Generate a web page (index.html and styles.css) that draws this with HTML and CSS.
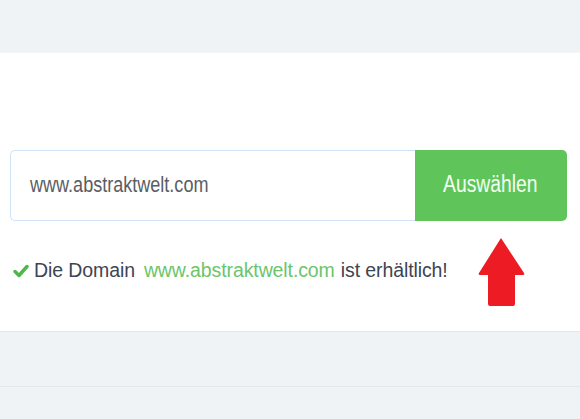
FILE: index.html
```html
<!DOCTYPE html>
<html lang="de">
<head>
<meta charset="utf-8">
<title>Domain</title>
<link rel="stylesheet" href="styles.css">
</head>
<body>
<div class="topbar"></div>
<section class="panel">
  <form class="search">
    <div class="field"><span class="narrow">www.abstraktwelt.com</span></div>
    <button type="button" class="btn"><span class="narrow">Auswählen</span></button>
  </form>
  <p class="status">
    <svg class="check" viewBox="0 0 16 14" width="16" height="14"><path d="M2 7.5 L6 11.5 L14 2.5" fill="none" stroke="#4cb848" stroke-width="3.4" stroke-linecap="round" stroke-linejoin="round"/></svg>
    <span class="txt">Die Domain</span>
    <span class="domain">www.abstraktwelt.com</span>
    <span class="txt">ist erhältlich!</span>
  </p>
  <svg class="arrow" viewBox="0 0 48 70" width="48" height="70"><path d="M23 1 L46 36 Q47 38 45 38 L37 38 L37 67 Q37 69 35 69 L12 69 Q10 69 10 67 L10 38 L2 38 Q0 38 1 36 Z" fill="#ed1c24"/></svg>
</section>
<div class="row"></div>
<div class="row last"></div>
</body>
</html>
```
FILE: styles.css
```css
* { box-sizing: border-box; }
html, body { margin: 0; padding: 0; }
body {
  background: #eff3f6;
  font-family: "Liberation Sans", Arial, sans-serif;
  width: 580px;
  height: 419px;
  overflow: hidden;
}
.topbar {
  height: 53px;
  background: #eff3f6;
  border-bottom: 1px solid #f3f6f9;
}
.panel {
  position: relative;
  background: #fff;
  height: 279px;
  padding: 97px 13px 0 10px;
  border-bottom: 1px solid #e3e7ea;
}
.search {
  display: flex;
  height: 71px;
  margin: 0;
}
.narrow {
  display: inline-block;
  transform: scaleX(0.82);
  transform-origin: left center;
  white-space: nowrap;
}
.field {
  flex: 1;
  border: 1px solid #cfe3f6;
  border-right: none;
  border-radius: 5px 0 0 5px;
  display: flex;
  align-items: center;
  padding: 0 0 1px 19px;
  font-size: 22px;
  color: #5a5d63;
}
.btn {
  width: 152px;
  border: none;
  border-radius: 0 5px 5px 0;
  background: #5fc55a;
  color: #f3fff1;
  font-family: "Liberation Sans", Arial, sans-serif;
  font-size: 23px;
  padding: 0 0 2px 28px;
  text-align: left;
}
.btn .narrow { transform: scaleX(0.84); }
.status {
  margin: 38px 0 0 3px;
  display: flex;
  align-items: center;
  font-size: 19.5px;
  color: #3e4552;
  letter-spacing: -0.1px;
}
.status .check { margin-right: 5px; }
.status .domain { color: #6cc56a; margin: 0 6px 0 9px; }
.arrow {
  position: absolute;
  left: 478px;
  top: 184px;
}
.row {
  height: 55px;
  border-bottom: 1px solid #e3e7ea;
}
.row.last { height: 31px; border-bottom: none; }
```
